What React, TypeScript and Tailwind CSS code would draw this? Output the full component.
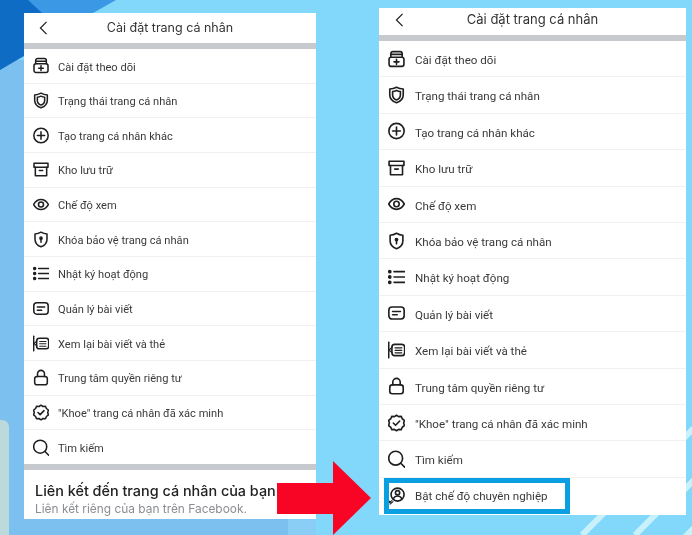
import type { ReactNode } from 'react';

const ink = '#1f1f1f';

const Svg = ({ children }: { children: ReactNode }) => (
  <svg viewBox="0 0 24 24" fill="none" stroke={ink} strokeWidth={2.300} strokeLinecap="round" strokeLinejoin="round" className="w-full h-full">
    {children}
  </svg>
);

const icons: Record<string, ReactNode> = {
  follow: (
    <Svg>
      <rect x="1.500" y="9.500" width="21" height="13" rx="3" />
      <path d="M4 9.500V4.500A3 3 0 0 1 7 1.500h10a3 3 0 0 1 3 3v5" />
      <path d="M4.500 5.500h15" />
      <path d="M12 12.500v7M8.500 16h7" />
    </Svg>
  ),
  status: (
    <Svg>
      <path d="M12 1c3 1.600 6 2.400 9.500 2.600v7.900c0 5.500-3.800 9.400-9.500 11.500-5.700-2.100-9.500-6-9.500-11.500V3.600C6 3.400 9 2.600 12 1z" />
      <path d="M12 5.500c1.900.9 3.700 1.400 5.500 1.600v4.800c0 3.200-2.100 5.600-5.500 7-3.400-1.400-5.500-3.800-5.500-7V7.100c1.800-.2 3.600-.7 5.500-1.600z" />
    </Svg>
  ),
  create: (
    <Svg>
      <circle cx="12" cy="12" r="10.800" />
      <path d="M12 6.500v11M6.500 12h11" />
    </Svg>
  ),
  archive: (
    <Svg>
      <path d="M1.500 2.500h21v6h-21z" />
      <path d="M3.500 8.500v13h17v-13" />
      <path d="M9.500 13.500h5" />
    </Svg>
  ),
  eye: (
    <Svg>
      <path d="M1 12C3.800 7 7.300 4.500 12 4.500S20.200 7 23 12c-2.800 5-6.300 7.500-11 7.500S3.800 17 1 12z" />
      <circle cx="12" cy="12" r="3.800" />
    </Svg>
  ),
  lock: (
    <Svg>
      <path d="M12 1c3 1.800 6 2.600 9 2.800v7.700c0 5.500-3.600 9.400-9 11.500-5.400-2.100-9-6-9-11.500V3.800C6 3.600 9 2.800 12 1z" />
      <circle cx="12" cy="10" r="1.600" fill={ink} />
      <path d="M12 10.500v5.500" />
    </Svg>
  ),
  list: (
    <Svg>
      <path d="M8.500 4.500H23.500M8.500 12H23.500M8.500 19.500H23.500" />
      <circle cx="2.500" cy="4.500" r="1.500" fill={ink} />
      <circle cx="2.500" cy="12" r="1.500" fill={ink} />
      <circle cx="2.500" cy="19.500" r="1.500" fill={ink} />
    </Svg>
  ),
  posts: (
    <Svg>
      <rect x="1.200" y="3.500" width="21.600" height="17" rx="4.500" />
      <path d="M6.500 9.800h11M6.500 14.500h6.500" />
    </Svg>
  ),
  review: (
    <Svg>
      <path d="M1 1v22" />
      <path d="M1.500 12L6 8M1.500 12L6 16" strokeWidth={1.600} />
      <rect x="5.500" y="4" width="18" height="16" rx="4" />
      <path d="M10 9h9.500M10 12.500h9.500M10 16h9.500" strokeWidth={1.600} />
    </Svg>
  ),
  privacy: (
    <Svg>
      <rect x="2.500" y="10.500" width="19" height="12.500" rx="3.500" />
      <path d="M6.800 10.500V6.500a5.200 5.200 0 0 1 10.400 0v4" />
    </Svg>
  ),
  verified: (
    <Svg>
      <path d="M12 1l3 2 3.700-.3 1.400 3.300 3 2.300-1 3.700 1 3.700-3 2.300-1.400 3.300-3.700-.3-3 2-3-2-3.700.3-1.400-3.300-3-2.300 1-3.700-1-3.700 3-2.300 1.400-3.300 3.700.3z" />
      <path d="M7.500 12l3.200 3.200 5.800-6" />
    </Svg>
  ),
  search: (
    <Svg>
      <circle cx="10.800" cy="10.800" r="9.800" />
      <path d="M18 18l5.500 5.500" />
    </Svg>
  ),
  pro: (
    <Svg>
      <circle cx="13.500" cy="10" r="9.200" />
      <circle cx="13.500" cy="7.500" r="3" />
      <path d="M7.500 15.500c1.500-2.500 3.500-3.500 6-3.500s4.500 1 6 3.500" />
      <path d="M0.500 22.500l5-4M3 23.500l4-3.500M1 18.500l3 3" strokeWidth={1.500} />
    </Svg>
  ),
};

const rows = [
  { icon: 'follow', label: 'Cài đặt theo dõi' },
  { icon: 'status', label: 'Trạng thái trang cá nhân' },
  { icon: 'create', label: 'Tạo trang cá nhân khác' },
  { icon: 'archive', label: 'Kho lưu trữ' },
  { icon: 'eye', label: 'Chế độ xem' },
  { icon: 'lock', label: 'Khóa bảo vệ trang cá nhân' },
  { icon: 'list', label: 'Nhật ký hoạt động' },
  { icon: 'posts', label: 'Quản lý bài viết' },
  { icon: 'review', label: 'Xem lại bài viết và thẻ' },
  { icon: 'privacy', label: 'Trung tâm quyền riêng tư' },
  { icon: 'verified', label: '"Khoe" trang cá nhân đã xác minh' },
  { icon: 'search', label: 'Tìm kiếm' },
];

const Header = ({ bar, title, back }: { bar: string; title: string; back: string }) => (
  <>
    <div className={`grid grid-cols-[40px_1fr_40px] items-center ${bar}`}>
      <svg viewBox="0 0 10 16" fill="none" stroke={ink} strokeWidth={1.400} className={`w-[9px] h-[14px] ${back}`}>
        <path d="M8.500 1L1.500 8l7 7" />
      </svg>
      <div className={`text-center text-[#333] ${title}`}>Cài đặt trang cá nhân</div>
      <div />
    </div>
    <div className="h-[6px] bg-[#c6c9ce]" />
  </>
);

const App = () => {
  return (
    <div className="relative w-[692px] h-[535px] overflow-hidden bg-[#82d8fb] font-['Inter',sans-serif] flex items-start blur-[0.3px]">
      {/* backdrop of the video frame */}
      <svg viewBox="0 0 692 535" className="absolute inset-0 w-full h-full">
        <path d="M0 60H288V535H0z" fill="#7cc0ef" />
        <path d="M288 500H316V535H288z" fill="#8acdf5" />
        <path d="M0 0H116L24 52 0 70z" fill="#3a98e4" />
        <path d="M0 0H28L42 13 24 56 0 70z" fill="#0f6cc4" />
        <path d="M0 420H2a7 7 0 0 1 7 7V535H0z" fill="#bcd9dc" />
        <path d="M582 535L612 505M635 535L665 505M685 537L695 527M682 440L695 427M682 492L695 479" stroke="#c9f1fb" strokeWidth={6} />
      </svg>

      {/* left phone */}
      <div className="relative ml-[24px] mt-[13px] w-[292px] h-[506px] bg-white overflow-hidden">
        <Header bar="h-[30px]" title="text-[12.500px]" back="ml-[15px]" />
        {rows.map((r) => (
          <div key={r.label} className="h-[34.670px] flex items-center gap-[9px] pl-[9px] border-b border-[#f0f1f3] font-['Roboto',sans-serif] text-[11.100px] text-[#3a3a3a]">
            <span className="w-[16px] h-[17px] shrink-0">{icons[r.icon]}</span>
            <span className="pt-[4px]">{r.label}</span>
          </div>
        ))}
        <div className="h-[6px] -mt-px bg-[#c6c9ce]" />
        <div className="pl-[11px] pt-[12px] whitespace-nowrap">
          <div className="text-[14.400px] leading-[18px] font-medium text-[#222]">Liên kết đến trang cá nhân của bạn</div>
          <div className="text-[11.900px] leading-[18px] text-[#8b8d91]">Liên kết riêng của bạn trên Facebook.</div>
        </div>
      </div>

      {/* right phone */}
      <div className="relative ml-[63px] mt-[8px] w-[307px] h-[507px] bg-white">
        <Header bar="h-[27px] pb-[3px]" title="text-[13px]" back="ml-[16px]" />
        {rows.map((r) => (
          <div key={r.label} className="h-[36.400px] flex items-center gap-[10px] pl-[9px] border-b border-[#f0f1f3] font-['Roboto',sans-serif] text-[11.600px] text-[#3a3a3a]">
            <span className="w-[17px] h-[18px] shrink-0">{icons[r.icon]}</span>
            <span className="pt-[4px]">{r.label}</span>
          </div>
        ))}
        <div className="relative h-[36.400px] flex items-center gap-[10px] pl-[9px] font-['Roboto',sans-serif] text-[11.600px] text-[#3a3a3a]">
          <span className="w-[17px] h-[18px] shrink-0">{icons.pro}</span>
          <span className="pt-[2px]">Bật chế độ chuyên nghiệp</span>
          <div className="absolute left-[5px] top-0 w-[186px] h-[36px] border-[5px] border-[#0a9fe0]" />
        </div>
      </div>

      {/* red arrow */}
      <svg viewBox="0 0 94 74" className="absolute left-[277px] top-[461px] w-[94px] h-[74px]">
        <path d="M0 22H56V0L94 37 56 74V53H0z" fill="#f80525" />
      </svg>
    </div>
  );
};

export default App;
